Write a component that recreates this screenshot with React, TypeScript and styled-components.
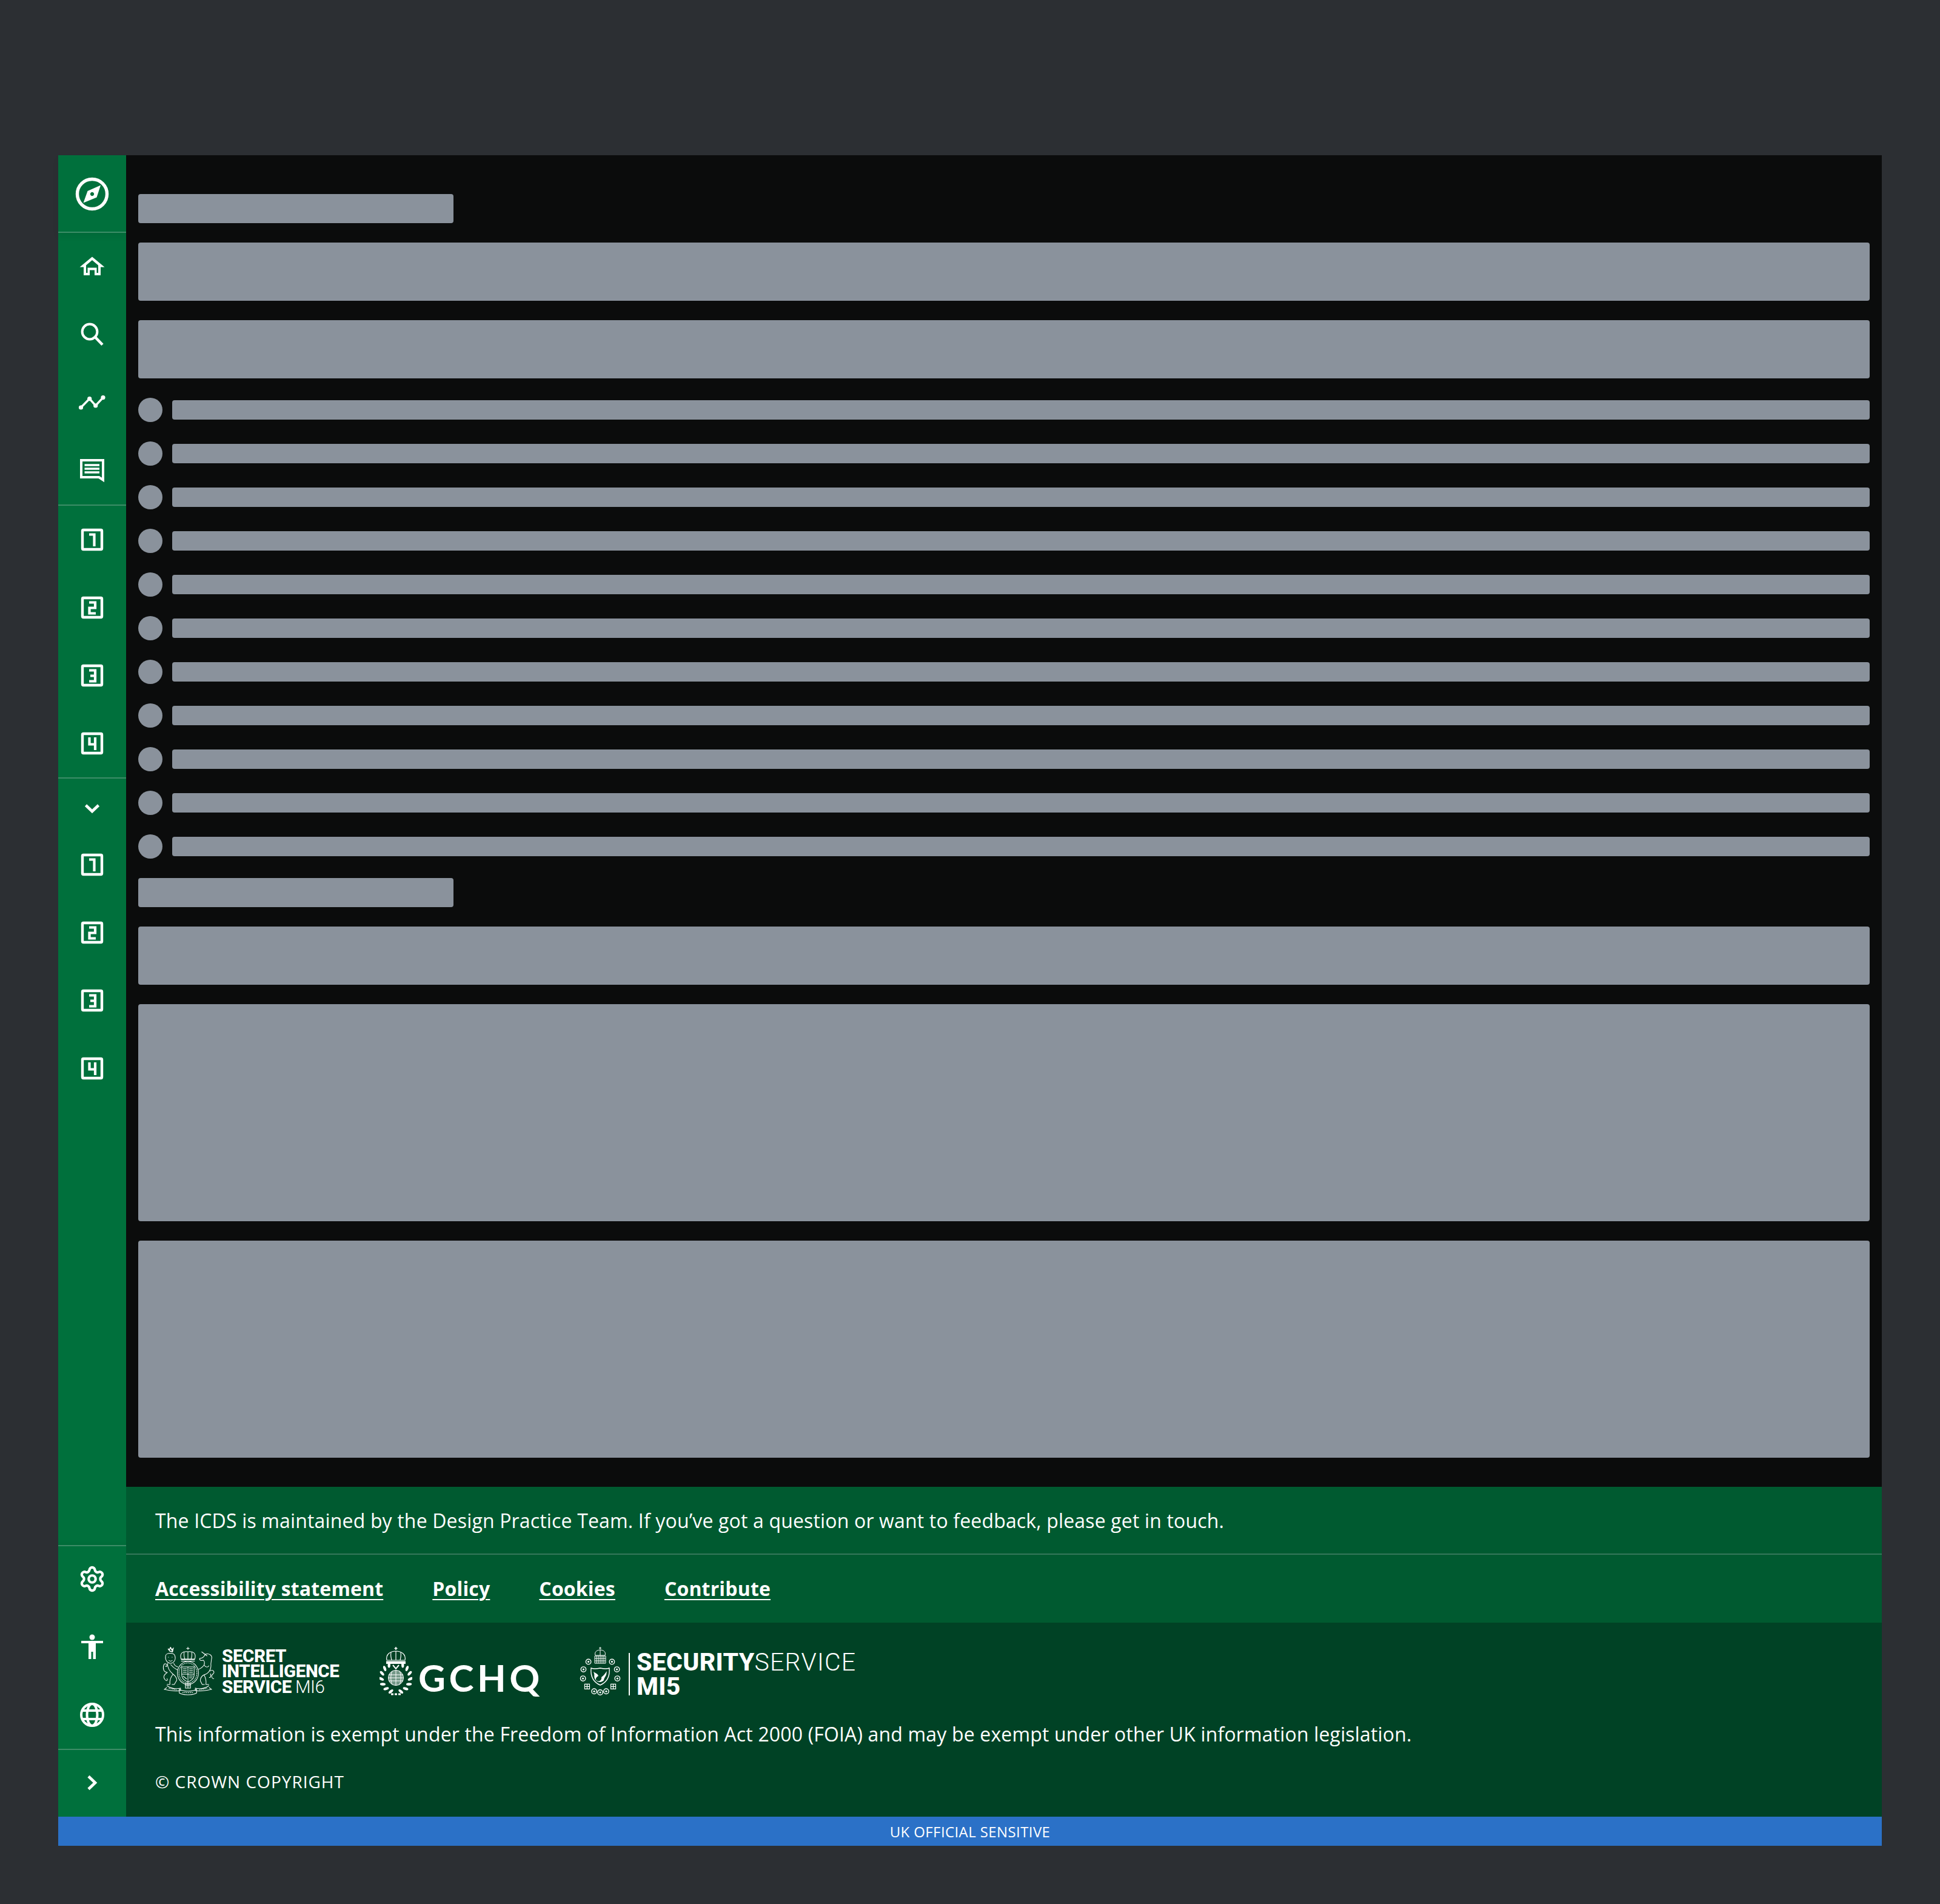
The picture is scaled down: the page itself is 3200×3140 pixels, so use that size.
import React from 'react'
import styled, { createGlobalStyle } from 'styled-components'
import { Settings } from 'lucide-react'

const GlobalStyle = createGlobalStyle`
    html, body {
        margin: 0;
        padding: 0;
        background: #2c2f33;
        font-family: "Open Sans", "Noto Sans", sans-serif;
    }
    * { box-sizing: border-box; }
`

const Page = styled.div`
    width: 3200px;
    height: 3140px;
    padding: 256px 96px 96px;
`
const Frame = styled.div`
    display: flex;
    flex-direction: column;
    height: 2788px;
`
const Body = styled.div`
    display: flex;
    flex: 1;
    min-height: 0;
`
const Sidebar = styled.nav`
    display: flex;
    flex-direction: column;
    width: 112px;
    flex-shrink: 0;
    background: #00703c;
`
const Brand = styled.div`
    display: flex;
    align-items: center;
    justify-content: center;
    height: 128px;
    box-shadow: inset 0 -2px 0 #3d8d67, 0 6px 10px rgba(0, 0, 0, 0.06);
`
const NavSection = styled.div<{ $divider?: boolean }>`
    display: flex;
    flex-direction: column;
    ${p => p.$divider && 'box-shadow: inset 0 -2px 0 #3d8d67; padding-bottom: 2px;'}
`
const NavSpacer = styled.div`
    flex: 1;
    box-shadow: inset 0 -10px 10px -8px rgba(0, 0, 0, 0.07);
`
const BottomSection = styled.div`
    display: flex;
    flex-direction: column;
    box-shadow: inset 0 2px 0 #3d8d67;
`
const NavItem = styled.a<{ $divider?: boolean }>`
    display: flex;
    align-items: center;
    justify-content: center;
    height: 112px;
    color: #fff;
    ${p => p.$divider && 'box-shadow: inset 0 2px 0 #3d8d67;'}
`
const CollapseRow = styled.a`
    display: flex;
    align-items: center;
    justify-content: center;
    height: 86px;
    padding-top: 14px;
    color: #fff;
`
const Icon = styled.svg`
    display: block;
    width: 60px;
    height: 60px;
    fill: none;
    stroke: #fff;
`
const GearIcon = styled(Settings)`
    display: block;
    color: #fff;
`

const Column = styled.div`
    display: flex;
    flex-direction: column;
    flex: 1;
    min-width: 0;
`
const Main = styled.main`
    display: flex;
    flex-direction: column;
    gap: 32px;
    flex: 1;
    padding: 64px 20px 48px;
    background: #0b0c0c;
`
const Skeleton = styled.div<{ $height: number; $width?: number }>`
    height: ${p => p.$height}px;
    width: ${p => (p.$width ? `${p.$width}px` : '100%')};
    background: #8a929c;
    border-radius: 4px;
`
const ListRow = styled.div`
    display: flex;
    align-items: center;
    gap: 16px;
    height: 40px;
`
const Dot = styled.div`
    width: 40px;
    height: 40px;
    flex-shrink: 0;
    border-radius: 50%;
    background: #8a929c;
`
const LineBar = styled.div`
    flex: 1;
    height: 32px;
    background: #8a929c;
    border-radius: 4px;
`

const FooterNote = styled.div`
    display: flex;
    align-items: center;
    height: 112px;
    padding: 0 48px 2px;
    background: #005a30;
    box-shadow: inset 0 -2px 0 #36775a;
    color: #fff;
    font-size: 32px;
    letter-spacing: 0.16px;
`
const FooterLinks = styled.div`
    display: flex;
    align-items: center;
    gap: 81px;
    height: 112px;
    padding: 0 48px 2px;
    background: #005a30;
`
const FooterLink = styled.a`
    color: #fff;
    font-size: 32px;
    font-weight: 700;
    letter-spacing: 0.16px;
    text-decoration: underline;
    text-decoration-thickness: 2px;
    text-underline-offset: 5px;
`
const FooterLegal = styled.div`
    display: flex;
    flex-direction: column;
    height: 320px;
    padding: 40px 48px 0;
    background: #004225;
    color: #fff;
`
const LogoRow = styled.div`
    display: flex;
    align-items: flex-start;
    height: 80px;
`
const Logo = styled.div<{ $width: number; $gap: number }>`
    display: flex;
    align-items: center;
    flex-shrink: 0;
    width: ${p => p.$width}px;
    height: 80px;
    margin-left: ${p => p.$gap}px;
`
const Crest = styled.svg<{ $width: number }>`
    display: block;
    flex-shrink: 0;
    width: ${p => p.$width}px;
    height: 80px;
    fill: none;
    stroke: #fff;
`
const SisText = styled.div`
    margin-left: 11px;
    padding-top: 2px;
    font-family: Roboto, "Liberation Sans", sans-serif;
    font-size: 29.5px;
    font-weight: 800;
    line-height: 25.5px;
    letter-spacing: -0.4px;
    white-space: nowrap;
`
const LightPart = styled.span`
    font-weight: 300;
    margin-left: 6px;
`
const GchqText = styled.div`
    margin-left: 10px;
    padding-top: 20px;
    font-family: Lato, Roboto, sans-serif;
    font-size: 62px;
    font-weight: 700;
    line-height: 64px;
    letter-spacing: 5.5px;
    white-space: nowrap;
`
const LogoRule = styled.div`
    flex-shrink: 0;
    width: 2px;
    height: 70px;
    margin: 10px 11px 0 13px;
    background: #fff;
`
const MiText = styled.div`
    font-family: Roboto, "Liberation Sans", sans-serif;
    font-size: 41px;
    font-weight: 800;
    line-height: 40px;
    padding-top: 10px;
    letter-spacing: 0.3px;
    white-space: nowrap;
`
const ThinPart = styled.span`
    font-weight: 300;
    letter-spacing: 1.2px;
`
const LegalText = styled.p`
    margin: 42px 0 0;
    font-size: 32px;
    line-height: 44px;
    letter-spacing: 0.16px;
`
const Copyright = styled.p`
    margin: 34px 0 0;
    font-size: 28px;
    line-height: 44px;
    letter-spacing: 1px;
`
const Classification = styled.div`
    display: flex;
    align-items: center;
    justify-content: center;
    height: 48px;
    background: #2b71c7;
    color: #fff;
    font-size: 24px;
    letter-spacing: 0.4px;
`

const CompassIcon = () => (
    <Icon viewBox="0 0 60 60">
        <circle cx="30" cy="30" r="24.5" strokeWidth="5.4" />
        <path fill="#fff" fillRule="evenodd" stroke="none" d="M44 15.5 L37.5 35.5 L15.5 44.5 L22.5 25 Z M30 26.8 a3.2 3.2 0 1 0 0.01 0 Z" />
    </Icon>
)
const HomeIcon = () => (
    <Icon viewBox="0 0 60 60">
        <path
            fill="#fff"
            stroke="none"
            fillRule="evenodd"
            d="M30 13.5 L50.5 30.5 H44 V44 H34 V35.5 H26 V44 H16 V30.5 H9.5 Z M30 19 L20 27.5 V40 H22.5 V31.5 H37.5 V40 H40 V27.5 Z"
        />
    </Icon>
)
const SearchIcon = () => (
    <Icon viewBox="0 0 60 60">
        <circle cx="26" cy="25" r="12.4" strokeWidth="4" />
        <path d="M35 34 L47 46.5" strokeWidth="4.5" />
    </Icon>
)
const TrendIcon = () => (
    <Icon viewBox="0 0 60 60">
        <path d="M11.5 38 L25.7 23.6 L35.7 35 L48 21.6" strokeWidth="3.5" />
        <circle cx="11.5" cy="38" r="3.6" fill="#fff" stroke="none" />
        <circle cx="25.7" cy="23.6" r="3.6" fill="#fff" stroke="none" />
        <circle cx="35.7" cy="35" r="3.6" fill="#fff" stroke="none" />
        <circle cx="48" cy="21.6" r="3.6" fill="#fff" stroke="none" />
    </Icon>
)
const ChatIcon = () => (
    <Icon viewBox="0 0 60 60">
        <path d="M12 13 H48 V45.5 L41.2 41 H12 Z" strokeWidth="4" />
        <path d="M17.5 21 H42 M17.5 27 H42 M17.5 33 H42" strokeWidth="3.6" />
    </Icon>
)
const boxStrokes: Record<number, string> = {
    1: 'M25 21.5 H33.5 V41',
    2: 'M25 21.5 H35 V30.5 H25.5 V39.5 H36',
    3: 'M25 21.5 H35 V39.5 H25 M27 30.5 H35',
    4: 'M25.5 20 V31.5 H35 M35 20 V41',
}
const BoxIcon = ({ n }: { n: number }) => (
    <Icon viewBox="0 0 60 60">
        <rect x="14" y="14" width="32" height="32" rx="1.5" strokeWidth="4.4" />
        <path d={boxStrokes[n]} strokeWidth="4.2" />
    </Icon>
)
const ChevronDown = () => (
    <Icon viewBox="0 0 60 60">
        <path d="M19.5 24 L30 34 L40.5 24" strokeWidth="4.6" />
    </Icon>
)
const ChevronRight = () => (
    <Icon viewBox="0 0 60 60">
        <path d="M24 19.5 L35 30 L24 40.5" strokeWidth="4.6" />
    </Icon>
)
const PersonIcon = () => (
    <Icon viewBox="0 0 60 60">
        <circle cx="30" cy="14" r="4.5" fill="#fff" stroke="none" />
        <path d="M12 20 H48 V24 H36 V50 H31.5 V38 H28.5 V50 H24 V24 H12 Z" fill="#fff" stroke="none" />
    </Icon>
)
const GlobeIcon = () => (
    <Icon viewBox="0 0 60 60" strokeWidth="4">
        <circle cx="30" cy="30" r="18" />
        <ellipse cx="30" cy="30" rx="8.5" ry="18" />
        <path d="M13 23 H47 M13 37 H47" />
    </Icon>
)

const RoyalArms = () => (
    <Crest $width={90} viewBox="0 0 88 80" strokeWidth="1" preserveAspectRatio="none">
        {/* crown */}
        <path d="M44 0 V5 M41.5 2.5 H46.5 M33 20 C30 10 36 7 44 8 C52 7 58 10 55 20 Z M44 8 V20 M38 9 C37 13 38 17 39 20 M50 9 C51 13 50 17 49 20 M33 21 H55 M33 23.5 H55" />
        {/* shield and garter */}
        <ellipse cx="44" cy="43" rx="17" ry="19" />
        <ellipse cx="44" cy="43" rx="14.5" ry="16.5" strokeDasharray="2 1" />
        <path d="M34 33 H54 V46 C54 53 48 56 44 58 C40 56 34 53 34 46 Z M44 33 V58 M34 45 H54" />
        <path d="M36 36 H42 M36 39 H42 M36 42 H42 M46 36 H52 M46 39 H52 M46 42 H52 M36 48 L42 53 M46 48 H52 M46 51 H51" />
        {/* lion */}
        <path d="M15 7 L12 3 L14 5 L16 1 L18 5 L20 3 L19 8 Z" strokeWidth="1.6" />
        <path d="M8 15 C8 9 22 9 23 15 C25 21 21 27 16 27 C11 27 7 22 8 15 Z M12 17 H13 M18 17 H19 M13 22 C15 24 17 24 19 22" />
        <path d="M11 27 C11 34 14 40 20 45 C24 48 26 51 26 55 M21 27 C23 32 25 32 28 33 M16 29 C20 34 23 36 27 38 M20 45 C16 50 14 55 15 62 M15 62 H10 M26 55 L22 62 H18" />
        <path d="M11 42 C5 42 3 36 5 30 C6 27 10 27 10 31 C10 33 8 33 8 31 M11 42 C5 46 3 50 8 55 C10 57 12 54 10 52" />
        {/* unicorn */}
        <path d="M66 8 L75 15 M72 12 C78 10 84 14 82 20 L81 28 M72 12 C70 17 67 19 63 19 C62 22 65 23 69 22 C71 24 71 27 70 30 C67 34 64 36 61 37" />
        <path d="M81 28 C82 36 78 44 70 46 C66 48 64 52 64 56 M70 46 C73 52 74 56 73 62 H78 M64 56 L67 62 H71 M70 30 C73 34 76 34 78 31" />
        <path d="M79 40 C85 36 88 42 84 45 C80 48 84 54 86 52 M80 44 C82 48 80 52 78 50" />
        {/* scroll */}
        <path d="M10 64 C16 68 24 70 32 68 V72 C24 74 15 72 6 70 L10 67 M78 64 C72 68 64 70 56 68 V72 C64 74 73 72 82 70 L78 67" />
        <path d="M30 70 C36 74 52 74 58 70 V76 C52 80 36 80 30 76 Z" />
        <path d="M13 68 L26 71 M62 71 L75 68 M35 75.5 H53" strokeDasharray="2 1" />
        <rect x="40" y="60" width="8" height="8" />
        <path d="M44 60 V68 M40 64 H48" />
    </Crest>
)

const wreathAngles = [28, 50, 72, 94, 116, 138, 160]
const GchqCrest = () => (
    <Crest $width={54} viewBox="0 0 54 80" strokeWidth="1.2">
        <path d="M27 0 V5 M24.5 2.5 H29.5" strokeWidth="1.6" />
        <path d="M12 22 C10 12 18 7 27 7 C36 7 44 12 42 22 Z M27 7 V22 M19 9 C18 14 19 18 20 22 M35 9 C36 14 35 18 34 22" />
        <path d="M11 23.5 H43 V28 H11 Z" fill="#fff" stroke="none" />
        <path d="M22 30 L27 36 L32 30" strokeWidth="2" />
        <circle cx="27" cy="51" r="12.5" strokeWidth="1" fill="#fff" fillOpacity="0.45" />
        <path d="M15 46 H39 M14.5 51 H39.5 M15 56 H39 M27 38.5 V63.5 M21 39.5 C18 46 18 56 21 62.5 M33 39.5 C36 46 36 56 33 62.5" strokeWidth="1" />
        {wreathAngles.map(a => {
            const r = (a * Math.PI) / 180
            const y = 51 - 24 * Math.cos(r)
            const dx = 24 * Math.sin(r)
            return (
                <g key={a} fill="#fff" stroke="none">
                    <ellipse cx={27 - dx} cy={y} rx="2.2" ry="4.6" transform={`rotate(${-a + 30} ${27 - dx} ${y})`} />
                    <ellipse cx={27 + dx} cy={y} rx="2.2" ry="4.6" transform={`rotate(${a - 30} ${27 + dx} ${y})`} />
                </g>
            )
        })}
        <path d="M19 78 H35" strokeWidth="3" strokeDasharray="4 2" />
    </Crest>
)

const ringItems = [
    { a: 42, grid: false },
    { a: 72, grid: false },
    { a: 102, grid: false },
    { a: 132, grid: true },
    { a: 160, grid: false },
    { a: 180, grid: false },
    { a: -160, grid: false },
    { a: -132, grid: true },
    { a: -102, grid: false },
    { a: -72, grid: false },
    { a: -42, grid: false },
]
const SecurityCrest = () => (
    <Crest $width={68} viewBox="0 0 68 80" strokeWidth="1">
        <path d="M34 0 V4 M32 2 H36 M26 14 C24 8 29 5 34 5 C39 5 44 8 42 14 Z M34 5 V14" />
        <path d="M25 15 H43 V27 H25 Z M28 15 V27 M31 15 V27 M34 15 V27 M37 15 V27 M40 15 V27 M25 19 H43 M25 23 H43" />
        {ringItems.map(({ a, grid }) => {
            const r = (a * Math.PI) / 180
            const x = 34 + 29 * Math.sin(r)
            const y = 46 - 29 * Math.cos(r)
            return grid ? (
                <path key={a} d={`M${x - 4} ${y - 4} h8 v8 h-8 Z M${x - 4} ${y} h8 M${x} ${y - 4} v8`} strokeWidth="1.2" />
            ) : (
                <g key={a}>
                    <circle cx={x} cy={y} r="4.2" strokeWidth="1.4" />
                    <circle cx={x} cy={y} r="1.6" fill="#fff" stroke="none" />
                </g>
            )
        })}
        <path d="M19 35 C24 37 29 36 34 35 C39 36 44 37 49 35 C50 46 48 57 34 63 C20 57 18 46 19 35 Z" fill="none" stroke="#fff" strokeWidth="1.4" />
        <path d="M23 41 C27 44 30 44 31 48 C27 50 25 54 29 56 C33 58 37 54 36 50 C40 47 42 44 45 40 L44 46 C42 50 40 52 40 55 C38 58 30 60 26 54 C23 50 25 46 24 44 Z" fill="#fff" stroke="none" />
    </Crest>
)

const NavIcons = () => (
    <>
        <NavItem><BoxIcon n={1} /></NavItem>
        <NavItem><BoxIcon n={2} /></NavItem>
        <NavItem><BoxIcon n={3} /></NavItem>
        <NavItem><BoxIcon n={4} /></NavItem>
    </>
)

const rows = Array.from({ length: 11 }, (_, i) => i)

export default function App() {
    return (
        <Page>
            <GlobalStyle />
            <Frame>
                <Body>
                    <Sidebar>
                        <Brand><CompassIcon /></Brand>
                        <NavSection $divider>
                            <NavItem><HomeIcon /></NavItem>
                            <NavItem><SearchIcon /></NavItem>
                            <NavItem><TrendIcon /></NavItem>
                            <NavItem><ChatIcon /></NavItem>
                        </NavSection>
                        <NavSection $divider>
                            <NavIcons />
                        </NavSection>
                        <CollapseRow><ChevronDown /></CollapseRow>
                        <NavSection>
                            <NavIcons />
                        </NavSection>
                        <NavSpacer />
                        <BottomSection>
                            <NavItem><GearIcon size={46} strokeWidth={2.2} /></NavItem>
                            <NavItem><PersonIcon /></NavItem>
                            <NavItem><GlobeIcon /></NavItem>
                            <NavItem $divider><ChevronRight /></NavItem>
                        </BottomSection>
                    </Sidebar>
                    <Column>
                        <Main>
                            <Skeleton $height={48} $width={520} />
                            <Skeleton $height={96} />
                            <Skeleton $height={96} />
                            {rows.map(i => (
                                <ListRow key={i}>
                                    <Dot />
                                    <LineBar />
                                </ListRow>
                            ))}
                            <Skeleton $height={48} $width={520} />
                            <Skeleton $height={96} />
                            <Skeleton $height={358} />
                            <Skeleton $height={358} />
                        </Main>
                        <FooterNote>
                            The ICDS is maintained by the Design Practice Team. If you’ve got a question or want to feedback, please get in touch.
                        </FooterNote>
                        <FooterLinks>
                            <FooterLink>Accessibility statement</FooterLink>
                            <FooterLink>Policy</FooterLink>
                            <FooterLink>Cookies</FooterLink>
                            <FooterLink>Contribute</FooterLink>
                        </FooterLinks>
                        <FooterLegal>
                            <LogoRow>
                                <Logo $width={298} $gap={9}>
                                    <RoyalArms />
                                    <SisText>
                                        SECRET<br />
                                        INTELLIGENCE<br />
                                        SERVICE<LightPart>MI6</LightPart>
                                    </SisText>
                                </Logo>
                                <Logo $width={266} $gap={63}>
                                    <GchqCrest />
                                    <GchqText>GCHQ</GchqText>
                                </Logo>
                                <Logo $width={480} $gap={64}>
                                    <SecurityCrest />
                                    <LogoRule />
                                    <MiText>
                                        SECURITY<ThinPart>SERVICE</ThinPart><br />
                                        MI5
                                    </MiText>
                                </Logo>
                            </LogoRow>
                            <LegalText>
                                This information is exempt under the Freedom of Information Act 2000 (FOIA) and may be exempt under other UK information legislation.
                            </LegalText>
                            <Copyright>© CROWN COPYRIGHT</Copyright>
                        </FooterLegal>
                    </Column>
                </Body>
                <Classification>UK OFFICIAL SENSITIVE</Classification>
            </Frame>
        </Page>
    )
}
